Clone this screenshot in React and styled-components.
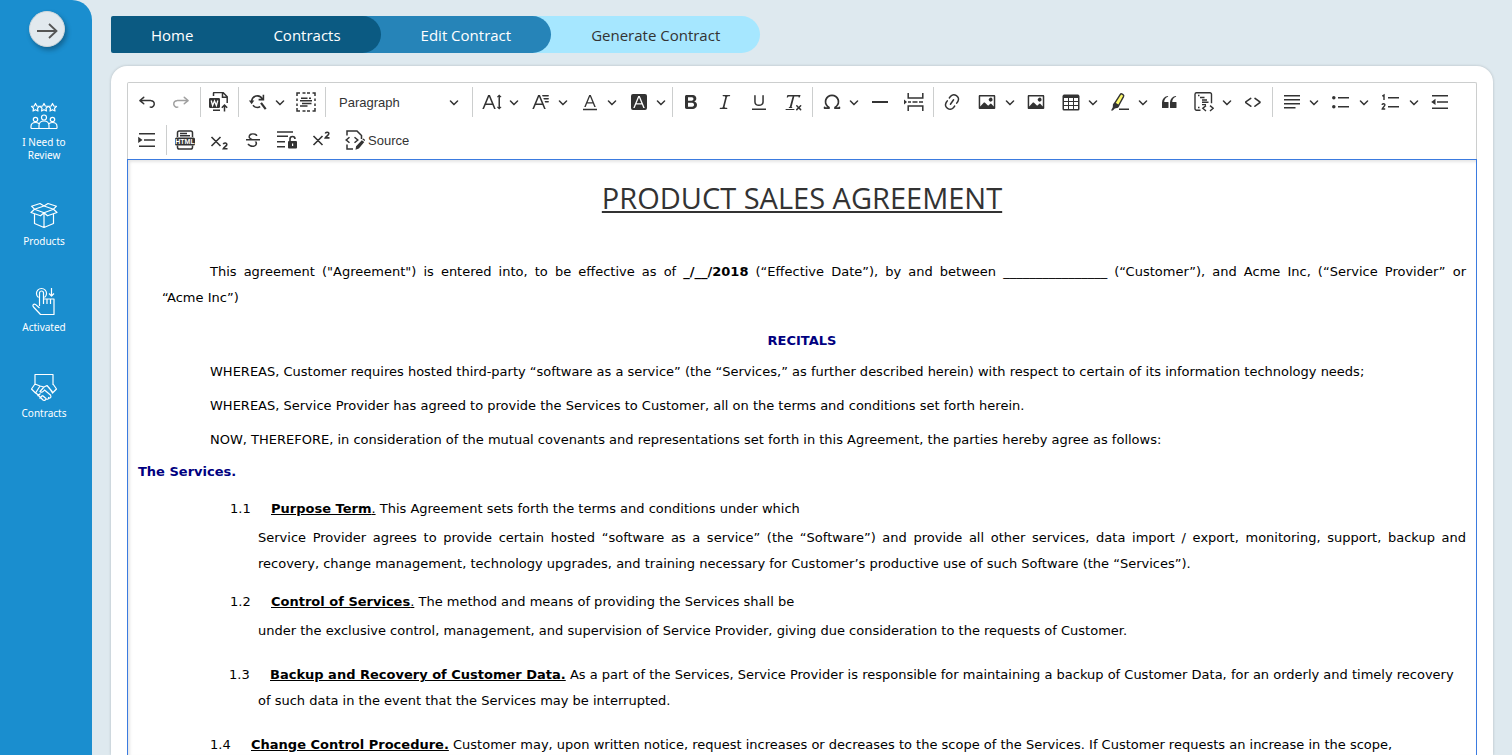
import React, { useState } from "react";
import styled, { createGlobalStyle, css } from "styled-components";

const colors = {
  page: "#dee9ef",
  side: "#1a8ecf",
  ink: "#333333",
  line: "#cccece",
  focus: "#3b7be0",
  navy: "#000080",
};

const ui = `"Open Sans", "Noto Sans", sans-serif`;
const doc = `"DejaVu Sans", sans-serif`;
const toolbarFont = `"Liberation Sans", Arial, sans-serif`;

// 20x20 toolbar glyphs
const icons = {
  undo: (
    <path d="m5.042 9.367 2.189 1.837a.75.75 0 0 1-.965 1.149l-3.788-3.18a.747.747 0 0 1-.21-.284.75.75 0 0 1 .17-.945L6.23 4.762a.75.75 0 1 1 .964 1.15L4.863 7.866h8.917A.75.75 0 0 1 14 7.9a4 4 0 1 1-1.477 7.718l.344-1.489a2.5 2.5 0 1 0 1.094-4.73l.008-.032H5.042z" />
  ),
  redo: (
    <path d="m14.958 9.367-2.189 1.837a.75.75 0 0 0 .965 1.149l3.788-3.18a.747.747 0 0 0 .21-.284.75.75 0 0 0-.17-.945L13.77 4.762a.75.75 0 1 0-.964 1.15l2.331 1.955H6.22A.75.75 0 0 0 6 7.9a4 4 0 1 0 1.477 7.718l-.344-1.489A2.5 2.5 0 1 1 6.039 9.4l-.008-.032h8.927z" />
  ),
  word: (
    <>
      <path
        d="M4.5 4V1.5a1 1 0 0 1 1-1h8.5l4.2 4.2V11M13.5.8v4.4h4.6M4 18.2h7M15.5 19.5v-6M12.8 15.8l2.7-2.7 2.7 2.7"
        fill="none"
        stroke="currentColor"
        strokeWidth="1.5"
      />
      <rect x="0" y="6" width="11" height="10" rx="1.2" />
      <path
        d="m2.2 8.5 1.4 5 1.9-4.6 1.9 4.6 1.4-5"
        fill="none"
        stroke="#fff"
        strokeWidth="1.3"
      />
    </>
  ),
  find: (
    <>
      <path
        d="M3.700 9.500A5.600 5.600 0 0 1 14.300 7M15.400 2.800v4.800h-4.800M5 13.200a5.600 5.600 0 0 0 7.200 1.400"
        fill="none"
        stroke="currentColor"
        strokeWidth="1.600"
      />
      <path d="m13 10.800 4.700 6.400" stroke="currentColor" strokeWidth="2.200" />
      <path d="M.900 8.600h5.400l-2.700 3.600z" />
    </>
  ),
  selectAll: (
    <path
      d="M1 4V1h3M6.5 1h3M11 1h3M16.5 1h2.5v3M1 6.5v2.5M1 11.5V14M1 16v3h3M6.5 19h3M11 19h3M16.5 19H19v-3M19 6.5V9M19 11.500V14M5 6.200h6.500M13 6.200h2M4 8.800h12M6 11.400h9.500M4 14h7.500"
      fill="none"
      stroke="currentColor"
      strokeWidth="1.5"
    />
  ),
  fontSize: (
    <path d="M9.816 11.5 7.038 4.785 4.261 11.5h5.555zm.62 1.5H3.641l-1.666 4.028H.312l5.789-14h1.875l5.789 14h-1.663L10.436 13zm7.55 2.279.779-.779.707.707-2.265 2.265-2.193-2.265.707-.707.765.765V4.825c0-.042 0-.083.002-.123l-.77.77-.707-.707L17.207 2.5l2.265 2.265-.707.707-.782-.782c.002.043.003.089.003.135v10.454z" />
  ),
  fontFamily: (
    <path d="M11.03 3h6.149a.75.75 0 1 1 0 1.5h-5.514L11.03 3zm1.27 3h4.879a.75.75 0 1 1 0 1.5h-4.244L12.3 6zm1.27 3h3.609a.75.75 0 1 1 0 1.5h-2.973L13.57 9zm-2.754 2.5L8.038 4.785 5.261 11.5h5.555zm.62 1.5H4.641l-1.666 4.028H1.312l5.789-14h1.875l5.789 14h-1.663L11.436 13z" />
  ),
  fontColor: (
    <path d="M12.4 10.3 10 4.5l-2.4 5.8h4.8zm.5 1.2H7.1L5.7 15H4.2l5-12h1.6l5 12h-1.5l-1.4-3.500zM17 18.300H3v-1.600h14z" />
  ),
  fontBackground: (
    <path
      fillRule="evenodd"
      d="M4 2h12a2 2 0 0 1 2 2v12a2 2 0 0 1-2 2H4a2 2 0 0 1-2-2V4a2 2 0 0 1 2-2zm8.380 9.262H7.620L10 5.506l2.380 5.756zm.532 1.285L14.340 16h1.426L10.804 4H9.196L4.234 16H5.660l1.428-3.453h5.824z"
    />
  ),
  bold: (
    <path d="M10.187 17H5.773c-.637 0-1.092-.138-1.364-.415-.273-.277-.409-.718-.409-1.323V4.738c0-.617.14-1.062.419-1.332.279-.27.73-.406 1.354-.406h4.68c.69 0 1.288.041 1.793.124.506.083.96.242 1.36.478.341.197.644.447.906.75a3.262 3.262 0 0 1 .808 2.162c0 1.401-.722 2.426-2.167 3.075C15.05 10.175 16 11.315 16 13.01a3.756 3.756 0 0 1-2.296 3.504 6.1 6.1 0 0 1-1.517.377c-.571.073-1.238.11-2 .11zm-.217-6.217H7v4.087h3.069c1.977 0 2.965-.69 2.965-2.072 0-.707-.256-1.22-.768-1.537-.512-.319-1.277-.478-2.296-.478zM7 5.13v3.619h2.606c.729 0 1.292-.067 1.69-.2a1.6 1.6 0 0 0 .91-.765c.165-.267.247-.566.247-.897 0-.707-.26-1.176-.778-1.409-.519-.232-1.31-.348-2.375-.348H7z" />
  ),
  italic: (
    <path d="m9.586 14.633.021.004c-.036.335.095.655.393.962.082.083.173.15.274.201h1.474a.6.6 0 1 1 0 1.2H5.304a.6.6 0 0 1 0-1.2h1.15c.474-.07.809-.182 1.005-.334.157-.122.291-.32.404-.597l2.416-9.55a1.053 1.053 0 0 0-.281-.823 1.12 1.12 0 0 0-.442-.296H8.15a.6.6 0 0 1 0-1.2h6.443a.6.6 0 1 1 0 1.2h-1.195c-.376.056-.65.155-.823.296-.215.175-.423.439-.623.79l-2.366 9.347z" />
  ),
  underline: (
    <path d="M3 18v-1.5h14V18zm2.2-8V3.6c0-.4.4-.6.8-.6.3 0 .7.2.7.6v6.2c0 2 1.3 2.8 3.2 2.8 1.9 0 3.4-.9 3.4-2.9V3.6c0-.3.4-.5.8-.5.3 0 .7.2.7.5V10c0 2.7-2.2 4-4.9 4-2.6 0-4.7-1.2-4.7-4z" />
  ),
  removeFormat: (
    <path d="M8.69 14.915c.053.052.173.083.36.093a.366.366 0 0 1 .345.485l-.003.01a.738.738 0 0 1-.697.497h-2.67a.374.374 0 0 1-.353-.496l.013-.038a.681.681 0 0 1 .644-.458c.197-.012.325-.043.386-.093a.28.28 0 0 0 .072-.11L9.592 4.5H6.269c-.359-.017-.609.013-.75.09-.142.078-.289.265-.442.563-.192.29-.516.464-.864.464H4.17a.43.43 0 0 1-.407-.569L4.46 3h13.08l-.62 2.043a.81.81 0 0 1-.775.574h-.114a.486.486 0 0 1-.486-.486c.001-.284-.054-.464-.167-.54-.112-.076-.367-.106-.766-.091h-3.28l-2.68 10.257c-.006.074.007.127.038.158zM3 17h8a.5.5 0 1 1 0 1H3a.5.5 0 1 1 0-1zm11.299 1.17a.75.75 0 1 1-1.06-1.06l1.414-1.415-1.415-1.414a.75.75 0 0 1 1.06-1.06l1.415 1.414 1.414-1.415a.75.75 0 1 1 1.06 1.06l-1.413 1.415 1.414 1.415a.75.75 0 0 1-1.06 1.06l-1.415-1.414-1.414 1.414z" />
  ),
  omega: (
    <path d="M10 2.5a7.47 7.47 0 0 1 4.231 1.31 7.268 7.268 0 0 1 2.703 3.454 7.128 7.128 0 0 1 .199 4.353c-.39 1.436-1.475 2.72-2.633 3.677h2.013c0-.226.092-.443.254-.603a.876.876 0 0 1 1.229 0c.163.16.254.377.254.603v.853c0 .209-.078.41-.22.567a.873.873 0 0 1-.547.28l-.101.006h-4.695a.517.517 0 0 1-.516-.518v-1.265c0-.21.128-.398.317-.489a5.601 5.601 0 0 0 2.492-2.371 5.459 5.459 0 0 0 .552-3.693 5.53 5.53 0 0 0-1.955-3.2A5.71 5.71 0 0 0 10 4.206 5.708 5.708 0 0 0 6.419 5.46 5.527 5.527 0 0 0 4.46 8.663a5.457 5.457 0 0 0 .554 3.695 5.6 5.6 0 0 0 2.497 2.37.55.55 0 0 1 .317.49v1.264c0 .286-.23.518-.516.518H2.618a.877.877 0 0 1-.614-.25.845.845 0 0 1-.254-.603v-.853c0-.226.091-.443.254-.603a.876.876 0 0 1 1.228 0c.163.16.255.377.255.603h1.925c-1.158-.958-2.155-2.241-2.545-3.678a7.128 7.128 0 0 1 .199-4.352 7.268 7.268 0 0 1 2.703-3.455A7.475 7.475 0 0 1 10 2.5z" />
  ),
  rule: <path d="M2 9h16v2H2z" />,
  pageBreak: (
    <>
      <path
        d="M4.200 1v5h14.600V1M4.200 19v-5h14.600v5M4 10h3M8.500 10h5M15 10h4"
        fill="none"
        stroke="currentColor"
        strokeWidth="1.5"
      />
      <path d="M0 7.600 3 10 0 12.400z" />
    </>
  ),
  link: (
    <path d="m11.077 15 .991-1.416a.75.75 0 1 1 1.229.86l-1.148 1.64a.748.748 0 0 1-.217.206 5.251 5.251 0 0 1-8.503-5.955.741.741 0 0 1 .12-.274l1.147-1.639a.75.75 0 1 1 1.228.86L4.933 10.7l.006.003a3.75 3.75 0 0 0 6.132 4.294l.006.004zm5.494-5.335a.748.748 0 0 1-.12.274l-1.147 1.639a.75.75 0 1 1-1.228-.86l.86-1.23a3.75 3.75 0 0 0-6.144-4.301l-.86 1.229a.75.75 0 0 1-1.229-.86l1.148-1.64a.748.748 0 0 1 .217-.206 5.251 5.251 0 0 1 8.503 5.955zm-4.563-2.532a.75.75 0 0 1 .184 1.045l-3.155 4.505a.75.75 0 1 1-1.229-.86l3.155-4.506a.75.75 0 0 1 1.045-.184z" />
  ),
  image: (
    <path d="M6.91 10.54c.26-.23.64-.21.88.03l3.36 3.14 2.23-2.06a.64.64 0 0 1 .87 0l2.52 2.97V4.5H3.2v10.12l3.71-4.08zm10.27-7.51c.6 0 1.09.47 1.09 1.05v11.84c0 .59-.49 1.06-1.09 1.06H2.79c-.6 0-1.09-.47-1.09-1.06V4.08c0-.58.49-1.05 1.1-1.05h14.38zm-5.22 5.56a1.96 1.96 0 1 1 3.4-1.96 1.96 1.96 0 0 1-3.4 1.96z" />
  ),
  table: (
    <path d="M3 6v3h4V6H3zm0 4v3h4v-3H3zm0 4v3h4v-3H3zm5 3h4v-3H8v3zm5 0h4v-3h-4v3zm4-4v-3h-4v3h4zm0-4V6h-4v3h4zm1.5 8a1.5 1.5 0 0 1-1.5 1.5H3A1.5 1.5 0 0 1 1.5 17V4c.222-.863 1.068-1.5 2-1.5h13c.932 0 1.778.637 2 1.5v13zM12 13v-3H8v3h4zm0-4V6H8v3h4z" />
  ),
  highlight: (
    <>
      <path
        d="m4.800 11.200 5.400-8.600c.5-.8 1.300-.9 2-.5l.8.500c.8.500.9 1.200.5 2l-4.900 9z"
        fill="#fdf96b"
        stroke="currentColor"
        strokeWidth="1.400"
      />
      <path d="m4.200 10.500 5.200 3.300-1.300 2-3.300.8-2 1.900H1l1.800-3.200.1-2.800zM9 16.500h10V18H9z" />
    </>
  ),
  quote: (
    <path d="M3 10.423a6.5 6.5 0 0 1 6.056-6.408l.038.67C6.448 5.423 5.354 7.663 5.22 10H9c.552 0 .5.432.5.986v4.511c0 .554-.448.503-1 .503h-5c-.552 0-.5-.449-.5-1.003v-4.574zm8 0a6.5 6.5 0 0 1 6.056-6.408l.038.67c-2.646.739-3.74 2.979-3.873 5.315H17c.552 0 .5.432.5.986v4.511c0 .554-.448.503-1 .503h-5c-.552 0-.5-.449-.5-1.003v-4.574z" />
  ),
  codeBlock: (
    <path
      d="M6.500 18.300H2.500a1.500 1.500 0 0 1-1.500-1.500V2.200A1.500 1.500 0 0 1 2.500.8h13.500a1.500 1.500 0 0 1 1.500 1.500v9M4 3.500h1.500M6 5.500h4.500M8 8h5M8 10.300h6.500M8 12.600h4M4 15.500h1.500M12 13.600l-3.200 2.700 3.200 2.700M16 13.600l3.200 2.700-3.200 2.700"
      fill="none"
      stroke="currentColor"
      strokeWidth="1.400"
    />
  ),
  code: (
    <path d="m12.5 5.7 5.2 3.9v1.3l-5.6 4c-.1.2-.3.2-.5.2-.3-.1-.6-.7-.6-1l.3-.4 4.7-3.5L11.5 7l-.2-.2c-.1-.3-.1-.6 0-.8.2-.2.5-.4.8-.4a.8.8 0 0 1 .4.1zm-5.2 0L2 9.6v1.3l5.6 4c.1.2.3.2.5.2.3-.1.7-.7.6-1 0-.1 0-.3-.2-.4l-5-3.5L8.2 7l.2-.2c.1-.3.1-.6 0-.8-.2-.2-.5-.4-.8-.4a.8.8 0 0 0-.3.1z" />
  ),
  align: <path d="M2 3h16v1.500H2zM2 7h16v1.500H2zM2 11h16v1.500H2zM2 15h11.500v1.500H2z" />,
  bullets: (
    <>
      <circle cx="2.800" cy="5.700" r="1.750" />
      <circle cx="2.800" cy="14.700" r="1.750" />
      <path d="M7 5h11v1.500H7zM7 14h11v1.500H7z" />
    </>
  ),
  numbers: (
    <>
      <path d="M7 5h11v1.500H7zM7 14h11v1.500H7z" />
      <path
        d="M1.300 4.200 3 3.100v5M1 12.800c.2-1.400 3-1.500 2.900.2C3.800 14.300 1.300 15.600 1.200 17h3"
        fill="none"
        stroke="currentColor"
        strokeWidth="1.400"
      />
    </>
  ),
  outdent: (
    <path d="M2 3h16v1.500H2zM7 9.200h11v1.500H7zM2 15.500h16V17H2zM5.500 6.800v6.200L1.200 9.900z" />
  ),
  indent: (
    <path d="M2 3h16v1.500H2zM7 9.200h11v1.500H7zM2 15.500h16V17H2zM1.200 6.800v6.200l4.300-3.100z" />
  ),
  html: (
    <>
      <path
        d="M2.500 7V2.800A1.800 1.800 0 0 1 4.300 1h11.400a1.800 1.800 0 0 1 1.800 1.800V7M2.500 15.500v1.700A1.800 1.800 0 0 0 4.300 19h11.400a1.800 1.800 0 0 0 1.800-1.800v-1.700M5 3.500h7M5 5.700h10"
        fill="none"
        stroke="currentColor"
        strokeWidth="1.500"
      />
      <rect x="0" y="7.500" width="20" height="8" rx="1.500" />
      <text
        x="10"
        y="14"
        textAnchor="middle"
        fill="#fff"
        fontFamily="Liberation Sans, sans-serif"
        fontWeight="700"
        fontSize="7"
      >
        HTML
      </text>
    </>
  ),
  subscript: (
    <path
      d="m2.500 7 9 9M11.500 7l-9 9M14.300 14.300c.5-1.900 3.700-1.600 3.500.3-.1 1.500-2.700 2.300-3.500 4.100h4.200"
      fill="none"
      stroke="currentColor"
      strokeWidth="1.600"
    />
  ),
  superscript: (
    <path
      d="m2.500 6 9 9M11.500 6l-9 9M14.300 3.500c.5-1.900 3.700-1.600 3.500.3-.1 1.500-2.700 2.300-3.500 4.100h4.200"
      fill="none"
      stroke="currentColor"
      strokeWidth="1.600"
    />
  ),
  strike: (
    <path d="M7 16.400c-.8-.4-1.500-.9-2.200-1.500a.6.6 0 0 1-.2-.5l.3-.6h1c1 1.200 2.100 1.700 3.700 1.700 1 0 1.800-.3 2.300-.6.6-.4.6-1.200.6-1.300.2-1.200-.9-2.100-.9-2.100h2.100c.3.700.4 1.200.4 1.700v.8l-.6 1.200c-.6.8-1.100 1-1.600 1.200a6 6 0 0 1-2.400.6c-1 0-1.800-.3-2.500-.6zM6.800 9 6 8.300c-.4-.5-.5-.8-.5-1.600 0-.7.1-1.300.5-1.800.4-.6 1-1 1.600-1.300a6.300 6.300 0 0 1 4.700 0 4 4 0 0 1 1.700 1l.3.7c0 .1.2.4-.2.7-.4.2-.9.1-1 0a3 3 0 0 0-1.200-1c-.4-.2-1-.3-2-.4-.7 0-1.400.2-2 .6-.8.6-1 .8-1 1.500 0 .8.5 1 1.200 1.500.6.4 1.100.7 1.900 1H6.800zM3 10.500V9h14v1.500z" />
  ),
  lock: (
    <>
      <path d="M0 1.200h16v1.500H0zM0 5.400h11v1.500H0zM0 11h8v1.500H0zM0 16h8v1.500H0z" />
      <rect x="11" y="11" width="9" height="7.500" rx="1" />
      <path
        d="M13 11V9a2.500 2.500 0 0 1 5 0"
        fill="none"
        stroke="currentColor"
        strokeWidth="1.600"
      />
      <path d="M15 13.500h1.200v2.500H15z" fill="#fff" />
    </>
  ),
  source: (
    <>
      <path
        d="M2 5.500V1h10l4.500 4.500V9M2 14.500V19h6M4.500 7.200 1.200 10l3.300 2.800M9.500 7.200l3.300 2.800-3.300 2.800"
        fill="none"
        stroke="currentColor"
        strokeWidth="1.500"
      />
      <path d="m16.800 10.200 2.500 1.900-5.400 6.300-3.400 1.300.6-3.400zM17.300 9.300l1-.9 2 1.700-.8 1z" />
    </>
  ),
};

const toolbar = [
  { icon: "undo", label: "Undo" },
  { icon: "redo", label: "Redo", disabled: true },
  { sep: true },
  { icon: "word", label: "Import from Word" },
  { sep: true },
  { icon: "find", label: "Find and replace", menu: true },
  { icon: "selectAll", label: "Select all" },
  { sep: true },
  { heading: true },
  { sep: true },
  { icon: "fontSize", label: "Font size", menu: true },
  { icon: "fontFamily", label: "Font family", menu: true },
  { icon: "fontColor", label: "Font color", menu: true },
  { icon: "fontBackground", label: "Font background color", menu: true },
  { sep: true },
  { icon: "bold", label: "Bold" },
  { icon: "italic", label: "Italic" },
  { icon: "underline", label: "Underline" },
  { icon: "removeFormat", label: "Remove format" },
  { sep: true },
  { icon: "omega", label: "Special characters", menu: true },
  { icon: "rule", label: "Horizontal line" },
  { icon: "pageBreak", label: "Page break" },
  { sep: true },
  { icon: "link", label: "Link" },
  { icon: "image", label: "Insert image", menu: true, split: true },
  { icon: "image", label: "Image gallery" },
  { icon: "table", label: "Insert table", menu: true },
  { icon: "highlight", label: "Highlight", menu: true, split: true },
  { icon: "quote", label: "Block quote" },
  { icon: "codeBlock", label: "Insert code block", menu: true, split: true },
  { icon: "code", label: "Code" },
  { sep: true },
  { icon: "align", label: "Text alignment", menu: true },
  { icon: "bullets", label: "Bulleted list", menu: true, split: true },
  { icon: "numbers", label: "Numbered list", menu: true, split: true },
  { icon: "outdent", label: "Decrease indent" },
  { icon: "indent", label: "Increase indent" },
  { sep: true },
  { icon: "html", label: "Insert HTML" },
  { icon: "subscript", label: "Subscript" },
  { icon: "strike", label: "Strikethrough" },
  { icon: "lock", label: "Restricted editing" },
  { icon: "superscript", label: "Superscript" },
  { icon: "source", label: "Source", text: true },
];

const star = (x) =>
  `M${x} 1.500l1.300 2.500 2.700.4-2 1.900.5 2.700-2.500-1.300-2.500 1.300.5-2.700-2-1.900 2.700-.4z`;

const menu = [
  {
    label: "I Need to Review",
    art: (
      <>
        <path d={star(5.5)} />
        <path d={star(14)} />
        <path d={star(22.5)} />
        <circle cx="14" cy="15.500" r="2.500" />
        <circle cx="5.500" cy="17.500" r="2.200" />
        <circle cx="22.500" cy="17.500" r="2.200" />
        <path d="M9 26.500v-3c0-2.500 2-4.500 5-4.500s5 2 5 4.500v3M1 26.500v-2c0-2.500 1.800-4 4.500-4 1.500 0 2.600.4 3.500 1.200M27 26.500v-2c0-2.500-1.800-4-4.500-4-1.500 0-2.600.4-3.500 1.200M1 26.500h26" />
      </>
    ),
  },
  {
    label: "Products",
    art: (
      <path d="M14 5 10 2.500 1.500 5.200 4.500 8.200 1 11.500 10.500 14.800 14 11.800 17.500 14.800 27 11.500 23.500 8.200 26.500 5.200 18 2.500 14 5 4.500 8.200 14 11.800 23.500 8.200 14 5M4.500 13v9.500L14 26.500l9.500-4V13M14 12v14.500" />
    ),
  },
  {
    label: "Activated",
    art: (
      <path d="M8.500 10.500a5 5 0 1 1 6 0M9.500 19V6a2 2 0 0 1 4 0v6h10.500v15.500H10.500L3.500 20c-1.500-2 .3-3.600 2-2.600l4 3.600M13.500 12v5M17 12.500V17M20.500 12.500V17M21.500 1v8M19 6.500l2.500 2.500L24 6.500" />
    ),
  },
  {
    label: "Contracts",
    art: (
      <path d="M5 12V1.500h18V12M5 11l-3.500 5 4 4 4.500-7zM23 11l3.500 5-4 4-3.500-5.500M10 13l4 1 3-1.500 5.500 6.500M14 14l-4 4.500c1.500 1.500 3 .5 4.500-1.500l6.500 5.500M6 20l7 7c1.500 1 3 0 3-1.500l-3.500-3M10.500 20.500 7.500 23M12.500 22.500l-3 3M16 26c2 .8 3-.5 2.500-2M18.500 25c2 .5 3-1 2-2.500" />
    ),
  },
];

const crumbs = [
  { label: "Home", tone: "dark" },
  { label: "Contracts", tone: "dark", end: true },
  { label: "Edit Contract", tone: "mid", end: true, tucked: true },
  { label: "Generate Contract", tone: "light", end: true, tucked: true },
];

const Chevron = () => (
  <svg width="10" height="10" viewBox="0 0 10 10" fill="currentColor">
    <path d="M.941 4.523a.75.75 0 1 1 1.060-1.060l3.006 3.005 3.005-3.005a.75.75 0 1 1 1.060 1.060l-3.549 3.550a.75.75 0 0 1-1.168-.136L.941 4.523z" />
  </svg>
);

const Glyph = ({ name }) => (
  <svg width="20" height="20" viewBox="0 0 20 20" fill="currentColor">
    {icons[name]}
  </svg>
);

function Tool({ item }) {
  if (item.sep) return <Separator />;
  if (item.heading) {
    return (
      <HeadingPicker>
        <select aria-label="Heading" defaultValue="Paragraph">
          <option>Paragraph</option>
          <option>Heading 1</option>
          <option>Heading 2</option>
        </select>
        <Chevron />
      </HeadingPicker>
    );
  }
  return (
    <ToolButton
      type="button"
      aria-label={item.label}
      disabled={item.disabled}
      $menu={item.menu}
      $split={item.split}
      $text={item.text}
    >
      <Glyph name={item.icon} />
      {item.menu && <Chevron />}
      {item.text && item.label}
    </ToolButton>
  );
}

function App() {
  const [open, setOpen] = useState(false);

  return (
    <Page>
      <GlobalStyle />
      <Sidebar>
        <Toggle
          type="button"
          aria-label="Toggle menu"
          aria-expanded={open}
          onClick={() => setOpen(!open)}
        >
          <svg width="22" height="16" viewBox="0 0 22 16">
            <path
              d="M1 8h19M13 1l7.500 7-7.500 7"
              fill="none"
              stroke="#555"
              strokeWidth="1.800"
            />
          </svg>
        </Toggle>
        {menu.map((entry) => (
          <SideLink href="#" key={entry.label}>
            <svg
              width="28"
              height="28"
              viewBox="0 0 28 28"
              fill="none"
              stroke="#fff"
              strokeWidth="1.200"
              strokeLinejoin="round"
            >
              {entry.art}
            </svg>
            {entry.label}
          </SideLink>
        ))}
      </Sidebar>
      <Main>
        <Crumbs>
          {crumbs.map((c) => (
            <Crumb
              href="#"
              key={c.label}
              $tone={c.tone}
              $end={c.end}
              $tucked={c.tucked}
            >
              {c.label}
            </Crumb>
          ))}
        </Crumbs>
        <Card>
          <Toolbar role="toolbar" aria-label="Editor toolbar">
            {toolbar.map((item, i) => (
              <Tool key={i} item={item} />
            ))}
          </Toolbar>
          <Editor>
            <Title>PRODUCT SALES AGREEMENT</Title>
            <Intro>
              This agreement ("Agreement") is entered into, to be effective as
              of <b>_/__/2018</b> (“Effective Date”), by and between
              ________________ (“Customer”), and Acme Inc, (“Service Provider”
              or “Acme{"\u00a0"}Inc”)
            </Intro>
            <Recitals>RECITALS</Recitals>
            <Whereas>
              WHEREAS, Customer requires hosted third-party “software as a
              service” (the “Services,” as further described herein) with
              respect to certain of its information technology needs;
            </Whereas>
            <Whereas>
              WHEREAS, Service Provider has agreed to provide the Services to
              Customer, all on the terms and conditions set forth herein.
            </Whereas>
            <Whereas>
              NOW, THEREFORE, in consideration of the mutual covenants and
              representations set forth in this Agreement, the parties hereby
              agree as follows:
            </Whereas>
            <Section>The Services.</Section>
            <Clause>
              <No>1.1</No>
              <Term>
                <b>Purpose Term</b>.
              </Term>{" "}
              This Agreement sets forth the terms and conditions under which
            </Clause>
            <ClauseBody>
              Service Provider agrees to provide certain hosted “software as a
              service” (the “Software”) and provide all other services, data
              import / export, monitoring, support, backup and recovery, change
              management, technology upgrades, and training necessary for
              Customer’s productive use of such Software (the “Services”).
            </ClauseBody>
            <Clause>
              <No>1.2</No>
              <Term>
                <b>Control of Services</b>.
              </Term>{" "}
              The method and means of providing the Services shall be
            </Clause>
            <ClauseBody>
              under the exclusive control, management, and supervision of
              Service Provider, giving due consideration to the requests of
              Customer.
            </ClauseBody>
            <HangingClause>
              <No>1.3</No>
              <Term>
                <b>Backup and Recovery of Customer Data.</b>
              </Term>{" "}
              As a part of the Services, Service Provider is responsible for
              maintaining a backup of Customer Data, for an orderly and timely
              recovery of such data in the event that the Services may be
              interrupted.
            </HangingClause>
            <OuterClause>
              <No>1.4</No>
              <Term>
                <b>Change Control Procedure.</b>
              </Term>{" "}
              Customer may, upon written notice, request increases or decreases
              to the scope of the Services. If Customer requests an increase in
              the scope,
            </OuterClause>
          </Editor>
        </Card>
      </Main>
    </Page>
  );
}

const GlobalStyle = createGlobalStyle`
  * {
    box-sizing: border-box;
  }

  body {
    margin: 0;
    background: ${colors.page};
  }
`;

const Page = styled.div`
  display: flex;
  height: 100vh;
  overflow: hidden;
  font-family: ${ui};
`;

const Sidebar = styled.nav`
  flex: 0 0 92px;
  display: flex;
  flex-direction: column;
  align-items: center;
  padding: 11px 6px 0 2px;
  background: ${colors.side};
  border-radius: 0 20px 0 0;
`;

const Toggle = styled.button`
  display: flex;
  align-items: center;
  justify-content: center;
  width: 36px;
  height: 36px;
  margin: 0 0 55px 6px;
  padding: 3px 0 0;
  border: 1px solid #d0d8dc;
  border-radius: 50%;
  background: #e2e9ee;
  box-shadow: 2px 3px 5px rgba(0, 0, 0, 0.3);
`;

const SideLink = styled.a`
  display: flex;
  flex-direction: column;
  align-items: center;
  width: 60px;
  margin-bottom: 39px;
  color: #fff;
  font-family: "Noto Sans", sans-serif;
  font-size: 10px;
  line-height: 13px;
  text-align: center;
  text-decoration: none;

  svg {
    margin-bottom: 6px;
  }
`;

const Main = styled.main`
  flex: 1;
  min-width: 0;
  display: flex;
  flex-direction: column;
  padding: 16px 19px 0;
`;

const Crumbs = styled.nav`
  display: flex;
  margin-bottom: 13px;
`;

const tones = {
  dark: css`
    background: #0b5a82;
    color: #fff;
    z-index: 3;
  `,
  mid: css`
    background: #2684b8;
    color: #fff;
    z-index: 2;
  `,
  light: css`
    background: #a6e7ff;
    color: #333;
    z-index: 1;
  `,
};

const Crumb = styled.a`
  position: relative;
  height: 37px;
  padding: 0 40px;
  font-size: 15px;
  line-height: 39px;
  text-decoration: none;
  border-radius: ${(props) => (props.$end ? "0 19px 19px 0" : "2px 0 0 2px")};
  ${(props) => tones[props.$tone]}

  /* starts underneath the rounded end of the step before it */
  ${(props) =>
    props.$tucked &&
    css`
      margin-left: -20px;
      padding-left: 60px;
    `}
`;

const Card = styled.section`
  flex: 1;
  min-height: 0;
  display: flex;
  flex-direction: column;
  padding: 16px 16px 0;
  background: #fff;
  border-radius: 16px 16px 0 0;
  box-shadow: 0 0 3px rgba(0, 0, 0, 0.2);
`;

const Toolbar = styled.div`
  display: flex;
  flex-wrap: wrap;
  gap: 8px 4px;
  padding: 4px;
  border: 1px solid ${colors.line};
  border-bottom: 0;
  border-radius: 2px 2px 0 0;
  color: ${colors.ink};
  font-family: ${toolbarFont};
`;

const Separator = styled.span`
  width: 1px;
  height: 30px;
  margin-right: -1px;
  background: ${colors.line};
`;

const ToolButton = styled.button`
  display: flex;
  align-items: center;
  justify-content: space-between;
  width: ${(props) => (props.$split ? 46 : props.$menu ? 45 : 30)}px;
  height: 30px;
  padding: ${(props) => (props.$menu ? "0 2px 0 6px" : "0 5px")};
  border: 0;
  background: none;
  color: inherit;
  font: 13px ${toolbarFont};

  &:disabled {
    color: #a0a0a0;
  }

  ${(props) =>
    props.$text &&
    css`
      width: auto;
      gap: 3px;
    `}

  svg {
    flex-shrink: 0;
  }
`;

const HeadingPicker = styled.label`
  display: flex;
  align-items: center;
  width: 139px;
  height: 30px;
  padding: 0 9px 0 10px;

  select {
    flex: 1;
    min-width: 0;
    padding: 0;
    border: 0;
    appearance: none;
    background: none;
    color: inherit;
    font: 13px ${toolbarFont};
  }
`;

const Editor = styled.article`
  flex: 1;
  min-height: 0;
  overflow: hidden;
  padding: 0 10px;
  border: 1px solid ${colors.focus};
  border-bottom: 0;
  box-shadow: inset 2px 2px 3px rgba(0, 0, 0, 0.1);
  color: #000;
  font-family: ${doc};
  font-size: 13px;
  line-height: 26px;
`;

const Title = styled.h1`
  margin: 18px 0 41px;
  color: ${colors.ink};
  font-family: ${ui};
  font-size: 29px;
  font-weight: 400;
  line-height: 40px;
  text-align: center;
  text-decoration: underline;
`;

const Intro = styled.p`
  margin: 0 0 17px 24px;
  text-align: justify;
  text-indent: 48px;
`;

const Recitals = styled.h2`
  margin: 0 0 5px;
  color: ${colors.navy};
  font-size: 13px;
  text-align: center;
`;

const Whereas = styled.p`
  margin: 0 0 8px 72px;
`;

const Section = styled.h2`
  margin: -2px 0 11px;
  color: ${colors.navy};
  font-size: 13px;
`;

const Clause = styled.p`
  margin: 11px 0 3px 92px;
`;

const ClauseBody = styled.p`
  margin: 0 0 12px 120px;
  text-align: justify;
`;

const HangingClause = styled.p`
  margin: 18px 0 18px 120px;
  text-indent: -29px;
`;

const OuterClause = styled.p`
  margin: 0 0 0 72px;
`;

const No = styled.span`
  display: inline-block;
  width: 41px;
  text-indent: 0;
`;

const Term = styled.span`
  text-decoration: underline;
`;

export default App;
